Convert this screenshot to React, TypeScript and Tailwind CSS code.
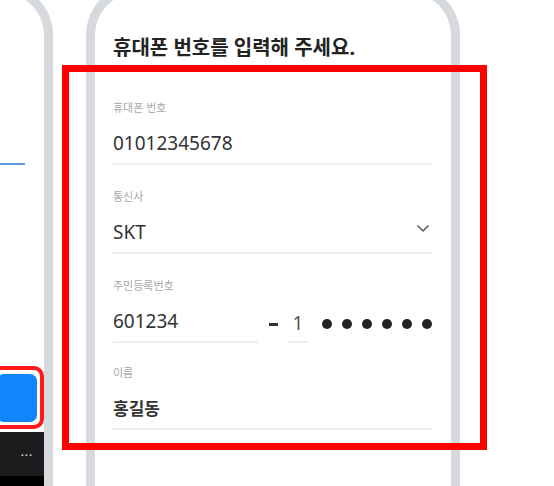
import React from 'react';

const font = { fontFamily: '"Noto Sans", "Noto Sans CJK KR", sans-serif' };

function Field({ label, children }: { label: string; children: React.ReactNode }) {
  return (
    <div className="mb-[24px]">
      <div className="h-[16px] text-[11px] leading-[16px] text-[#a8a8a8]">{label}</div>
      <div className="mt-[8px] flex h-[41px] items-center border-b-2 border-[#eeeeee]">{children}</div>
    </div>
  );
}

export default function App() {
  return (
    <div className="relative flex h-[486px] w-[554px] overflow-hidden bg-white" style={font}>
      {/* left phone, mostly off screen */}
      <div className="mt-[-16px] flex h-[502px] w-[53px] shrink-0 flex-col rounded-tr-[51px] border-t-[9px] border-r-[9px] border-[#d6dade] bg-white">
        <div className="mt-[170px] h-[2px] w-[25px] bg-[#5b9be8]" />
        <div className="flex-1" />
        <div className="ml-[-10px] rounded-[10px] border-4 border-[#ff1a1a] pt-[4px] pr-[3px] pb-[3px] pl-[3px]">
          <div className="h-[48px] rounded-[7px] bg-[#1284fc]" />
        </div>
        <div className="mt-[3px] flex h-[44px] items-center justify-end bg-[#1b1b1d] pr-[11px]">
          <span className="text-[11px] leading-none font-bold tracking-[1px] text-[#d0d0d0]">···</span>
        </div>
        <div className="h-[10px] bg-black" />
      </div>

      {/* right phone */}
      <div className="ml-[33px] mt-[-16px] h-[502px] w-[374px] shrink-0 rounded-t-[51px] border-x-[9px] border-t-[9px] border-[#d6dade] bg-white px-[18px] pt-[41px]">
        <h1 className="mb-[38px] text-[20px] leading-[28px] font-bold text-[#222]">휴대폰 번호를 입력해 주세요.</h1>

        <Field label="휴대폰 번호">
          <span className="text-[19px] text-[#333]">01012345678</span>
        </Field>

        <Field label="통신사">
          <span className="flex-1 text-[19px] text-[#333]">SKT</span>
          <svg width="14" height="9" viewBox="0 0 14 9" className="mr-[3px] mb-[8px]" fill="none">
            <polyline points="1.5,1.5 7,7 12.5,1.5" stroke="#555" strokeWidth="1.5" />
          </svg>
        </Field>

        <div className="mb-[22px]">
          <div className="h-[16px] text-[11px] leading-[16px] text-[#a8a8a8]">주민등록번호</div>
          <div className="mt-[8px] flex h-[41px] items-stretch">
            <div className="flex w-[145px] items-center border-b-2 border-[#eeeeee]">
              <span className="text-[19px] text-[#333]">601234</span>
            </div>
            <div className="flex w-[30px] items-center justify-center pl-[1px] pt-[3px]">
              <div className="h-[3px] w-[9px] bg-[#333]" />
            </div>
            <div className="flex w-[20px] items-center justify-center border-b-2 border-[#eeeeee] pt-[3px]">
              <span className="text-[19px] text-[#555]">1</span>
            </div>
            <div className="flex flex-1 items-center justify-end gap-[10px] pr-[1px] pt-[3px]">
              {[0, 1, 2, 3, 4, 5].map((i) => (
                <div key={i} className="h-[10px] w-[10px] rounded-full bg-[#222]" />
              ))}
            </div>
          </div>
        </div>

        <Field label="이름">
          <span className="text-[17px] font-semibold text-[#333]">홍길동</span>
        </Field>
      </div>

      {/* annotation */}
      <div className="pointer-events-none absolute left-[62px] top-[65px] h-[385px] w-[425px] border-[7px] border-[#ff0000]" />
    </div>
  );
}
